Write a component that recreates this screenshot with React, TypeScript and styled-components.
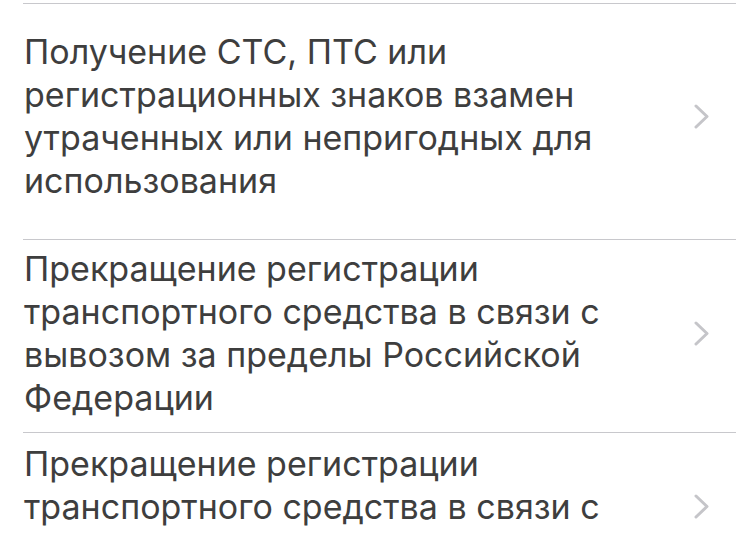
import React from 'react';
import styled, { createGlobalStyle } from 'styled-components';

const GlobalStyle = createGlobalStyle`
    html, body {
        margin: 0;
        padding: 0;
        background: #ffffff;
    }
    body {
        font-family: Inter, Roboto, "Liberation Sans", sans-serif;
        -webkit-font-smoothing: antialiased;
    }
`

type Service = {
    title: string;
    padTop: number;
    padBottom: number;
}

const services: Array<Service> = [
    { title: 'Получение СТС, ПТС или регистрационных знаков взамен утраченных или непригодных для использования', padTop: 26, padBottom: 37 },
    { title: 'Прекращение регистрации транспортного средства в связи с вывозом за пределы Российской Федерации', padTop: 7, padBottom: 13 },
    { title: 'Прекращение регистрации транспортного средства в связи с утилизацией', padTop: 9, padBottom: 13 },
]

const Chevron = () => (
    <svg width="17" height="25" viewBox="0 0 17 25" fill="none">
        <path d="M3 2 L14 12.5 L3 23" stroke="#c5c5c9" strokeWidth="3" strokeLinecap="round" strokeLinejoin="round" />
    </svg>
)

export default function App() {
    return <>
        <GlobalStyle />
        <List>
            {services.map(s => <Row key={s.title}>
                <RowBody padTop={s.padTop} padBottom={s.padBottom}>
                    <Title>{s.title}</Title>
                    <ChevronSlot><Chevron /></ChevronSlot>
                </RowBody>
            </Row>)}
        </List>
    </>
}

const List = styled.div`
    padding-top: 3px;
    height: 533px;
    overflow: hidden;
    background: #ffffff;
`

const Row = styled.div`
    margin-left: 23px;
    border-top: 1.5px solid #c8c8cc;
`

const RowBody = styled.div<{ padTop: number; padBottom: number }>`
    display: flex;
    align-items: center;
    padding: ${p => p.padTop}px 0 ${p => p.padBottom}px 1px;
`

const Title = styled.div`
    flex: 1;
    font-size: 34px;
    line-height: 43px;
    color: #3e3e3e;
    max-width: 620px;
    letter-spacing: 0;
`

const ChevronSlot = styled.div`
    width: 26px;
    margin-left: auto;
    margin-right: 17px;
    display: flex;
    align-items: center;
`
